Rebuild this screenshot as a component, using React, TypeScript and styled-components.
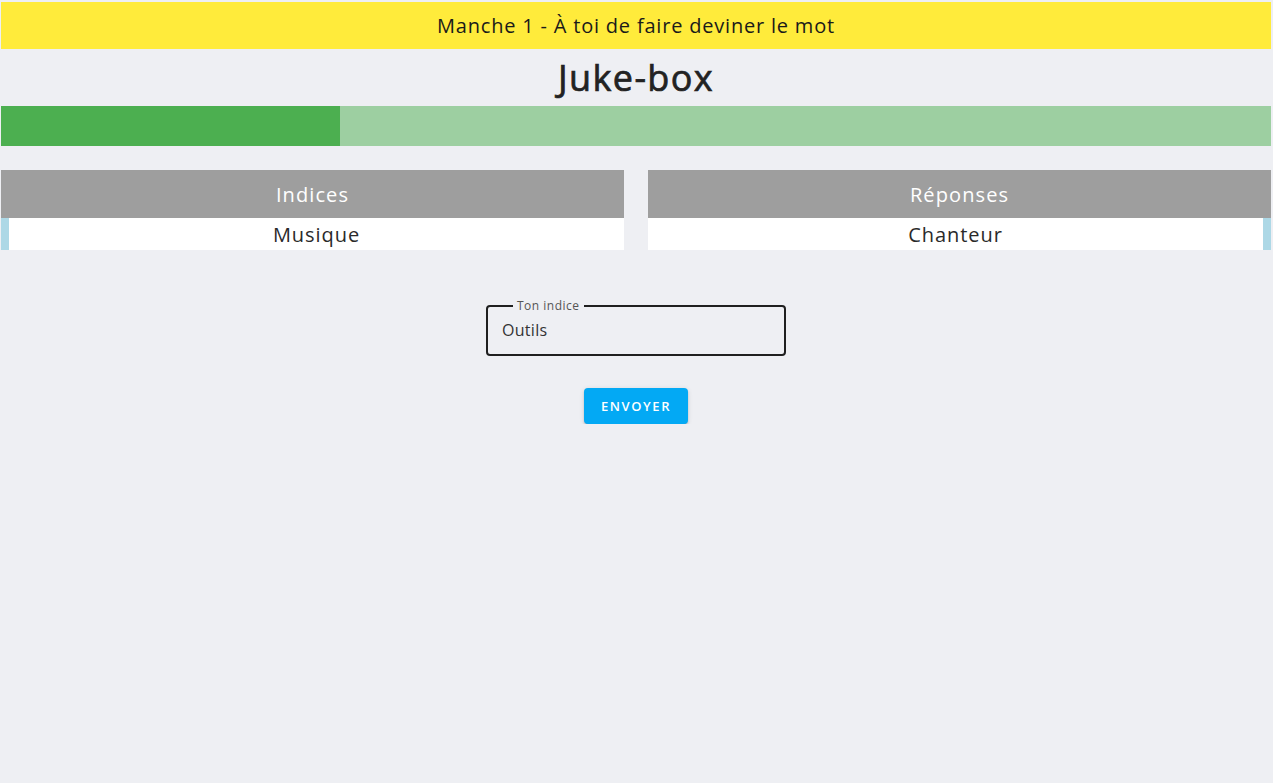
import React from "react";
import styled, { createGlobalStyle } from "styled-components";

const GlobalStyle = createGlobalStyle`
  html, body { margin: 0; padding: 0; }
  body {
    background: #eeeff3;
    font-family: "Open Sans", "Noto Sans", sans-serif;
    color: #222;
  }
`;

const Page = styled.div`
  padding: 2px 2px 0 1px;
  display: flex;
  flex-direction: column;
`;

const Banner = styled.div`
  height: 47px;
  background: #ffeb3b;
  display: flex;
  align-items: center;
  justify-content: center;
  font-size: 20px;
  letter-spacing: 0.8px;
  color: #1a1a1a;
`;

const Title = styled.h1`
  margin: 0;
  height: 57px;
  display: flex;
  align-items: center;
  justify-content: center;
  font-size: 36px;
  font-weight: 400;
  letter-spacing: 1.4px;
  -webkit-text-stroke: 0.7px #222;
  color: #222;
`;

const Progress = styled.div`
  height: 40px;
  background: #9dcfa1;
  display: flex;
`;

const ProgressFill = styled.div`
  background: #4caf50;
  height: 100%;
`;

const Tables = styled.div`
  margin-top: 24px;
  display: grid;
  grid-template-columns: 1fr 1fr;
  gap: 24px;
`;

const Column = styled.div`
  display: flex;
  flex-direction: column;
`;

const HeaderCell = styled.div`
  height: 48px;
  background: #9e9e9e;
  color: #fff;
  font-size: 20px;
  letter-spacing: 1.1px;
  display: flex;
  align-items: center;
  justify-content: center;
`;

const Row = styled.div<{ $side: "left" | "right" }>`
  height: 32px;
  background: #fff;
  box-sizing: border-box;
  ${(p) => (p.$side === "left" ? "border-left" : "border-right")}: 8px solid #add8e6;
  display: flex;
  align-items: center;
  justify-content: center;
  font-size: 20px;
  letter-spacing: 0.95px;
  color: #2a2a2a;
`;

const Form = styled.form`
  margin-top: 56px;
  display: flex;
  flex-direction: column;
  align-items: center;
`;

const Field = styled.div`
  position: relative;
  width: 300px;
  height: 50px;
  box-sizing: border-box;
`;

const Outline = styled.fieldset`
  position: absolute;
  inset: 0;
  margin: 0;
  padding: 0 8px;
  border: 2px solid #1f1f1f;
  border-radius: 4px;
  top: -6px;
  height: 56px;
  box-sizing: border-box;
`;

const Legend = styled.legend`
  padding: 0 4px;
  margin-left: 17px;
  font-size: 12px;
  letter-spacing: 0.5px;
  color: #555;
  line-height: 12px;
`;

const Input = styled.input`
  position: relative;
  width: 100%;
  height: 100%;
  box-sizing: border-box;
  border: none;
  background: transparent;
  outline: none;
  padding: 0 16px 2px 16px;
  font-family: inherit;
  font-size: 16px;
  letter-spacing: 0.3px;
  color: #333;
`;

const Button = styled.button`
  margin-top: 32px;
  width: 104px;
  height: 36px;
  border: none;
  border-radius: 4px;
  background: #03a9f4;
  color: #fff;
  font-family: "Open Sans", sans-serif;
  font-weight: 600;
  font-size: 13px;
  letter-spacing: 1.6px;
  padding: 0;
  box-shadow: 0 3px 1px -2px rgba(0,0,0,0.2), 0 2px 2px 0 rgba(0,0,0,0.14), 0 1px 5px 0 rgba(0,0,0,0.12);
  cursor: pointer;
`;

export default function App() {
  const progress = (339 / 1270) * 100;
  return (
    <>
      <GlobalStyle />
      <Page>
        <Banner>Manche 1 - À toi de faire deviner le mot</Banner>
        <Title>Juke-box</Title>
        <Progress>
          <ProgressFill style={{ width: `${progress}%` }} />
        </Progress>
        <Tables>
          <Column>
            <HeaderCell>Indices</HeaderCell>
            <Row $side="left">Musique</Row>
          </Column>
          <Column>
            <HeaderCell>Réponses</HeaderCell>
            <Row $side="right">Chanteur</Row>
          </Column>
        </Tables>
        <Form onSubmit={(e) => e.preventDefault()}>
          <Field>
            <Outline>
              <Legend>Ton indice</Legend>
            </Outline>
            <Input defaultValue="Outils" />
          </Field>
          <Button type="submit">ENVOYER</Button>
        </Form>
      </Page>
    </>
  );
}
